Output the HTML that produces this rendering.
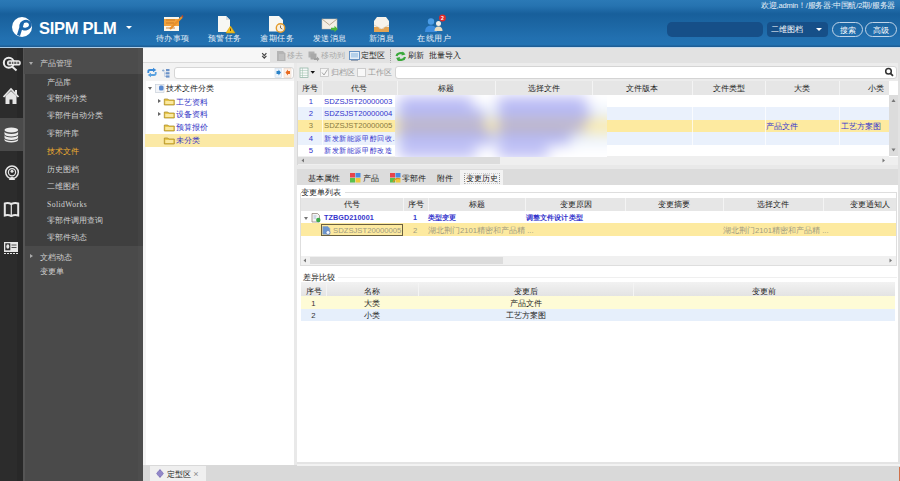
<!DOCTYPE html>
<html><head><meta charset="utf-8">
<style>
*{margin:0;padding:0;box-sizing:border-box}
html,body{width:900px;height:481px;overflow:hidden;background:#fff;font-family:"Liberation Sans",sans-serif;font-size:8px;color:#222}
.a{position:absolute}
.hdr{left:0;top:0;width:900px;height:47px;background:linear-gradient(#2b79b6 0px,#2673b0 6px,#175f9b 14px,#1c66a3 24px,#2270b0 38px,#2272b2 44.5px,#1d5e96 46.5px,#1d5e96 47px)}
.logo{left:12px;top:16px;width:21px;height:21px;border-radius:50%;background:#fff}
.brand{left:39px;top:18.5px;color:#fff;font-weight:bold;font-size:16.5px;letter-spacing:-0.3px}
.caret{left:126px;top:26px;width:0;height:0;border-left:3px solid transparent;border-right:3px solid transparent;border-top:3px solid #fff}
.nav{top:33px;color:#e8f0f8;font-size:8px;letter-spacing:0.5px;text-indent:0.5px;text-align:center;width:50px}
.welcome{left:761px;top:1px;color:#e8f0f8;font-size:7.5px;letter-spacing:-0.2px;white-space:nowrap}
.srch{left:667px;top:22px;width:96px;height:15px;background:#164f88;border-radius:5px}
.sel{left:767px;top:22px;width:61px;height:15px;background:#164f88;border-radius:4px;color:#fff;font-size:7.7px;padding:3px 0 0 4px}
.btn{top:22px;height:15px;border:1px solid #c0d4e8;border-radius:8px;color:#fff;font-size:7.7px;text-align:center;padding-top:3px}
.iconbar{left:0;top:47px;width:24px;height:434px;background:#2c2c2c}
.menu{left:24px;top:47px;width:119px;height:434px;background:#4a4a4a}
.mi{color:#d2d2d2;font-size:7.7px;white-space:nowrap;left:47px}
.sep{background:#e4e4e4}
.tr{font-size:7.5px;color:#3030c4;white-space:nowrap}
.tb{top:51px;font-size:7.7px;color:#222;white-space:nowrap}
.gh{background:#e6e6e6}
.ght{top:84px;font-size:7.7px;color:#222;text-align:center;white-space:nowrap}
.vs{width:1px;background:#f4f4f4}
.gc{font-size:7.7px;color:#3434cc;white-space:nowrap}
.b{font-weight:bold;font-size:7.2px;letter-spacing:0.1px}
.tab{top:174px;font-size:7.7px;color:#222;white-space:nowrap}
</style></head><body>
<!-- HEADER -->
<div class="a hdr"></div>
<svg class="a" style="left:0;top:0" width="900" height="47" viewBox="0 0 900 47">
 <circle cx="22" cy="27" r="10" fill="#fff"/>
 <path d="M22.5 22.5 L18.5 35.5" stroke="#1d66aa" stroke-width="3.2"/>
 <ellipse cx="25.6" cy="25.2" rx="4.8" ry="3.9" fill="none" stroke="#1d66aa" stroke-width="2.8" transform="rotate(-15 25.6 25.2)"/>
 <!-- todo icon -->
 <rect x="164" y="17" width="15" height="14" fill="#fbf6ea"/>
 <rect x="164" y="19" width="15" height="7" fill="#f0a23c"/>
 <path d="M166 20h9M166 23h8M166 28h9" stroke="#c07020" stroke-width="0.8"/>
 <path d="M170 29 L182 17" stroke="#e8902a" stroke-width="2.2"/>
 <path d="M182 16.5 L183 16" stroke="#d04020" stroke-width="2"/>
 <!-- warning doc -->
 <path d="M218 16h8l4 4v12h-12z" fill="#f7f7f4"/>
 <path d="M226 16v4h4" fill="#ddd"/>
 <path d="M230.5 26 L235 33 L226 33z" fill="#f0c020" stroke="#d09a10" stroke-width="0.6"/>
 <path d="M230.5 28.5v2.5" stroke="#603000" stroke-width="0.8"/>
 <!-- overdue doc -->
 <path d="M269 16h10l4 4v11.5h-14z" fill="#f7f7f4"/>
 <circle cx="280.5" cy="28" r="4.2" fill="#f8f0e0" stroke="#e39a2a" stroke-width="1.4"/>
 <path d="M280.5 25.5v2.5l1.8 1" stroke="#705030" stroke-width="0.8" fill="none"/>
 <!-- send msg -->
 <rect x="322" y="19" width="15" height="10" fill="#f3efe6" stroke="#c9c0b0" stroke-width="0.5"/>
 <path d="M322 19 L329.5 25 L337 19" stroke="#b8a890" stroke-width="1" fill="none"/>
 <path d="M331 27.8h3.5v-2l3.3 3.2-3.3 3.2v-2h-3.5z" fill="#4cb83a"/>
 <!-- new msg -->
 <path d="M374 21 L377 17 L386 17 L389 21 V32 H374z" fill="#f6f2ea"/>
 <path d="M374 25 L381.5 29 L389 25" stroke="#d5c6b0" stroke-width="0.8" fill="none"/>
 <path d="M374 27 H378 L380 29 H383 L385 27 H389 V32 H374z" fill="#e3a453"/>
 <!-- users -->
 <circle cx="431" cy="21.5" r="3.2" fill="#4a9ce6"/>
 <path d="M425 32 Q425 25.5 431 25.5 Q437 25.5 437 32z" fill="#3d8ee0"/>
 <circle cx="438.5" cy="23.5" r="2.5" fill="#f2efe8"/>
 <path d="M434.5 31 Q434.5 26.5 438.5 26.5 Q442.5 26.5 442.5 31z" fill="#e8dcc0"/>
 <circle cx="442.5" cy="18" r="3.4" fill="#e02a2a"/>
 <text x="442.5" y="20.2" font-size="5" fill="#fff" text-anchor="middle" font-family="Liberation Sans" font-weight="bold">2</text>
</svg>
<div class="a brand">SIPM PLM</div>
<div class="a caret"></div>
<div class="a nav" style="left:147.5px">待办事项</div>
<div class="a nav" style="left:199.5px">预警任务</div>
<div class="a nav" style="left:251.75px">逾期任务</div>
<div class="a nav" style="left:304.5px">发送消息</div>
<div class="a nav" style="left:356.25px">新消息</div>
<div class="a nav" style="left:409px">在线用户</div>
<div class="a welcome">欢迎,admin！/服务器:中国航/2期/服务器</div>
<div class="a srch"></div>
<div class="a sel">二维图档</div>
<div class="a" style="left:816px;top:28px;width:0;height:0;border-left:3px solid transparent;border-right:3px solid transparent;border-top:3.5px solid #fff"></div>
<div class="a btn" style="left:832px;width:31px">搜索</div>
<div class="a btn" style="left:865px;width:32px">高级</div>

<!-- LEFT -->
<div class="a iconbar"></div>
<div class="a menu"></div>
<div class="a" style="left:17px;top:47px;width:6px;height:434px;background:#282828"></div><div class="a" style="left:23px;top:47px;width:2px;height:434px;background:#555"></div>
<div class="a" style="left:0;top:118px;width:23px;height:33px;background:#4a4a4a"></div>

<svg class="a" style="left:0;top:47px" width="24" height="220" viewBox="0 47 24 220">
 <circle cx="8.8" cy="62.8" r="5" fill="none" stroke="#ececec" stroke-width="2"/>
 <path d="M12.3 66.8 L16.5 70.5" stroke="#ececec" stroke-width="2"/>
 <rect x="7" y="60.2" width="13.8" height="5.4" rx="2.7" fill="#ececec"/>
 <path d="M8.8 62.9h2.2M11.8 62.9h1.6M14.2 62.9h2.2M17.2 62.9h2" stroke="#666" stroke-width="2.4"/>
 <path d="M3.5 97 L11 89 L18.5 97" stroke="#e6e6e6" stroke-width="1.8" fill="none"/>
 <path d="M5.5 96 V104 H9.5 V99.5 H12.5 V104 H16.5 V96 L11 91z" fill="#e6e6e6"/>
 <rect x="15" y="90" width="2" height="4" fill="#e6e6e6"/>
 <ellipse cx="11.3" cy="130" rx="6.8" ry="2.4" fill="#ececec"/>
 <path d="M4.5 131.5 v2.5 a6.8 2.4 0 0 0 13.6 0 v-2.5 a6.8 2.4 0 0 1 -13.6 0z" fill="#ececec"/>
 <path d="M4.5 135 v2.5 a6.8 2.4 0 0 0 13.6 0 v-2.5 a6.8 2.4 0 0 1 -13.6 0z" fill="#ececec"/>
 <path d="M4.5 138.5 v1.5 a6.8 2.4 0 0 0 13.6 0 v-1.5 a6.8 2.4 0 0 1 -13.6 0z" fill="#ececec"/>
 <circle cx="12" cy="172.3" r="6.3" fill="none" stroke="#e6e6e6" stroke-width="1.5"/>
 <circle cx="12" cy="172.3" r="3.6" fill="none" stroke="#e6e6e6" stroke-width="1.2"/>
 <circle cx="12" cy="171.3" r="1.5" fill="#e6e6e6"/>
 <path d="M8.8 180 Q12 173.5 15.2 180z" fill="#e6e6e6"/>
 <path d="M4.8 203.5 Q8 202.5 11.3 204 Q14.6 202.5 18.2 203.5 V215.5 Q14.6 214.5 11.3 216 Q8 214.5 4.8 215.5z" fill="none" stroke="#e6e6e6" stroke-width="2"/>
 <path d="M11.3 204 V216" stroke="#e6e6e6" stroke-width="1.2"/>
 <rect x="4" y="242" width="14" height="10" fill="#e6e6e6"/>
 <rect x="5.3" y="243.3" width="5" height="7" fill="#2b2b2b"/>
 <ellipse cx="7.8" cy="246.5" rx="1.5" ry="2.2" fill="#e6e6e6"/>
 <path d="M11.5 245h5M11.5 247.5h5" stroke="#2b2b2b" stroke-width="0.8"/>
 <path d="M4 253.5h14" stroke="#e6e6e6" stroke-width="1.2" stroke-dasharray="2 1"/>
</svg>
<div class="a" style="left:24px;top:48px;width:119px;height:25.5px;background:#4c4c4c"></div><div class="a" style="left:25px;top:73.5px;width:118px;height:172.5px;background:#3f3f3f"></div><div class="a" style="left:138px;top:48px;width:5px;height:433px;background:rgba(128,128,128,0.06)"></div>
<div class="a mi" style="left:40px;top:59px">产品管理</div>
<div class="a" style="left:29px;top:62px;width:0;height:0;border-left:2.5px solid transparent;border-right:2.5px solid transparent;border-top:3.5px solid #aaa"></div>
<div class="a" style="left:30px;top:254px;width:0;height:0;border-top:2.5px solid transparent;border-bottom:2.5px solid transparent;border-left:3.5px solid #aaa"></div>
<div class="a mi" style="top:78px">产品库</div>
<div class="a mi" style="top:94px">零部件分类</div>
<div class="a mi" style="top:111px">零部件自动分类</div>
<div class="a mi" style="top:129px">零部件库</div>
<div class="a mi" style="top:147px;color:#f0b030">技术文件</div>
<div class="a mi" style="top:165px">历史图档</div>
<div class="a mi" style="top:182px">二维图档</div>
<div class="a mi" style="top:200px;font-family:'Liberation Serif',serif;letter-spacing:0.4px">SolidWorks</div>
<div class="a mi" style="top:216px">零部件调用查询</div>
<div class="a mi" style="top:233px">零部件动态</div>
<div class="a mi" style="left:40px;top:253px">文档动态</div>
<div class="a mi" style="left:40px;top:267px">变更单</div>

<!-- TREE PANEL -->
<div class="a" style="left:143px;top:47px;width:157px;height:418px;background:#e9e9e9"></div><div class="a" style="left:143px;top:81px;width:3px;height:384px;background:#f4f4f4"></div>
<div class="a" style="left:143px;top:47px;width:127px;height:16px;background:#f7f7f7;border-bottom:1px solid #dadada"></div>
<svg class="a" style="left:260px;top:51px" width="9" height="10" viewBox="260 51 9 10"><path d="M262.2 53.2 L264.3 55.6 L266.4 53.2 M262.2 55.8 L264.3 58.2 L266.4 55.8" stroke="#444" stroke-width="1.2" fill="none"/></svg>
<div class="a" style="left:143px;top:63px;width:151px;height:18px;background:#f3f3f3"></div>
<div class="a" style="left:174px;top:67px;width:120px;height:12px;background:#fff;border:1px solid #d6d6d6;border-radius:3px"></div>
<div class="a" style="left:146px;top:81px;width:148px;height:384px;background:#fff"></div>
<div class="a" style="left:145px;top:134px;width:149px;height:13px;background:#fbe9a6"></div>
<div class="a" style="left:147.5px;top:86.5px;width:0;height:0;border-left:2px solid transparent;border-right:2px solid transparent;border-top:3.5px solid #666"></div>
<div class="a tr" style="left:166px;top:84px;color:#222">技术文件分类</div>
<div class="a" style="left:157.5px;top:99px;width:0;height:0;border-top:2px solid transparent;border-bottom:2px solid transparent;border-left:3.5px solid #666"></div>
<div class="a tr" style="left:176px;top:98px">工艺资料</div>
<div class="a" style="left:157.5px;top:112px;width:0;height:0;border-top:2px solid transparent;border-bottom:2px solid transparent;border-left:3.5px solid #666"></div>
<div class="a tr" style="left:176px;top:110px">设备资料</div>
<div class="a tr" style="left:176px;top:123px">预算报价</div>
<div class="a tr" style="left:176px;top:136px">未分类</div>

<!-- MAIN TOOLBAR -->
<div class="a" style="left:270px;top:47px;width:630px;height:16px;background:#e2e2e2"></div>
<div class="a tb" style="left:287px;color:#aaa">移去</div>
<div class="a tb" style="left:321px;color:#aaa">移动到</div>
<div class="a tb" style="left:361px">定型区</div>
<div class="a" style="left:390px;top:50px;width:1px;height:11px;border-left:1px dotted #999"></div>
<div class="a tb" style="left:408px">刷新</div>
<div class="a tb" style="left:429px">批量导入</div>

<div class="a" style="left:297px;top:63px;width:603px;height:18px;background:#ececec"></div>
<div class="a tb" style="left:331px;top:68px;color:#999">归档区</div>
<div class="a tb" style="left:368px;top:68px;color:#999">工作区</div>
<div class="a" style="left:357px;top:68px;width:9px;height:9px;border:1px solid #cdcdcd;background:#f8f8f8"></div>
<div class="a" style="left:395px;top:66px;width:502px;height:13px;background:#fff;border:1px solid #d4d4d4;border-radius:3px"></div>

<!-- MAIN GRID -->
<div class="a" style="left:297px;top:81px;width:603px;height:84px;background:#fff;border-left:1px solid #d8d8d8"></div>
<div class="a gh" style="left:298px;top:81px;width:591px;height:14px"></div>
<div class="a" style="left:298px;top:95px;width:591px;height:12px;background:#fff"></div>
<div class="a" style="left:298px;top:107px;width:591px;height:13px;background:#eaf1fc"></div>
<div class="a" style="left:298px;top:120px;width:591px;height:12px;background:#fdeaa0"></div>
<div class="a" style="left:298px;top:132px;width:591px;height:13px;background:#eaf1fc"></div>
<div class="a" style="left:298px;top:145px;width:591px;height:11px;background:#fff"></div>
<div class="a" style="left:298px;top:156px;width:591px;height:9px;background:#efefef"></div>
<div class="a" style="left:298px;top:157px;width:202px;height:7px;background:#dcdcdc"></div>
<div class="a" style="left:889px;top:95px;width:9px;height:61px;background:#dcdcdc"></div>
<div class="a" style="left:898px;top:47px;width:2px;height:418px;background:#e2e2e2"></div>

<!-- TABS -->
<div class="a" style="left:297px;top:165px;width:601px;height:4px;background:#e9e9e9"></div>
<div class="a" style="left:297px;top:169px;width:601px;height:16px;background:#dcdcdc"></div>
<div class="a" style="left:460px;top:170px;width:43px;height:15px;background:#f3f3f3"></div>
<div class="a tab" style="left:308px">基本属性</div>
<div class="a tab" style="left:363px">产品</div>
<div class="a tab" style="left:402px">零部件</div>
<div class="a tab" style="left:437px">附件</div>
<div class="a tab" style="left:464px;top:173px;border:1px dotted #ccc;border-left-color:#888;border-right-color:#888;padding:0 1px;line-height:9px">变更历史</div>

<!-- CHANGE LIST -->
<div class="a" style="left:297px;top:185px;width:601px;height:279px;background:#fff"></div>
<div class="a tb" style="left:301px;top:188px">变更单列表</div>
<!-- ICONS TREE/TOOLBAR -->
<svg class="a" style="left:143px;top:47px" width="330" height="110" viewBox="143 47 330 110">
 <!-- refresh blue -->
 <path d="M148.3 73 V71.5 Q148.3 70 150 70 H153.5" stroke="#3a8ad8" stroke-width="1.8" fill="none"/>
 <path d="M153 67.8 L156.3 70 L153 72.2z" fill="#3a8ad8"/>
 <path d="M155.7 72 V73.5 Q155.7 75 154 75 H150.5" stroke="#5aa2e0" stroke-width="1.8" fill="none"/>
 <path d="M151 72.8 L147.7 75 L151 77.2z" fill="#5aa2e0"/>
 <!-- tree icon -->
 <path d="M162 70.5h2.5M163.2 69.3v2.4" stroke="#8aaad0" stroke-width="0.9"/>
 <rect x="166" y="69" width="3.5" height="2.2" fill="#6a92c8"/>
 <rect x="166" y="72.2" width="3.5" height="2.2" fill="#6a92c8"/>
 <rect x="166" y="75.4" width="3.5" height="2.2" fill="#6a92c8"/>
 <path d="M164.8 71.5v5h1.2M164.8 73.3h1.2" stroke="#9ab4d8" stroke-width="0.7" fill="none"/>
 <!-- small arrows in input -->
 <rect x="275" y="68.5" width="6.5" height="9" fill="#eef4fa" stroke="#c8d8e8" stroke-width="0.5"/>
 <path d="M276.5 71h2v-1.5l2.5 3-2.5 3v-1.5h-2z" fill="#2a82c8"/>
 <rect x="284" y="68.5" width="7" height="9" fill="#fbf0e8" stroke="#e8d0c0" stroke-width="0.5"/>
 <path d="M290 71h-2v-1.5l-2.5 3 2.5 3v-1.5h2z" fill="#e86a20"/>
 <!-- tree root icon -->
 <rect x="155.5" y="84.5" width="8.5" height="8" fill="#f2f4f8" stroke="#c0c8d4" stroke-width="0.6"/>
 <rect x="159" y="85.5" width="4.5" height="5" rx="1.5" fill="#5a8ad0"/>
 <!-- folders -->
 <g id="fd"><path d="M164.3 99 h3.5 l1 1 h5.5 v5 h-10z" fill="#e8c64a" stroke="#a48420" stroke-width="0.7"/><path d="M165.3 101 h8 v3 h-8z" fill="#fbe9a0"/></g>
 <use href="#fd" y="13"/><use href="#fd" y="26"/><use href="#fd" y="39"/>
 <!-- toolbar icons -->
 <path d="M277 51h6l2.5 2.5v7.5h-8.5z" fill="#b4b4b4"/>
 <path d="M279 55h5M279 57h5M279 59h5" stroke="#d8d8d8" stroke-width="0.7"/>
 <path d="M308.5 51.5h6v6h-6z" fill="#b0b0b0"/>
 <path d="M310.5 53.5h6v6h-6z" fill="#a8a8a8"/>
 <path d="M314 58h3v-1.5l2.5 2.5-2.5 2.5v-1.5h-3z" fill="#a0a0a0"/>
 <rect x="349.5" y="51.5" width="10" height="8" fill="#e6eef6" stroke="#5a8ac0" stroke-width="0.9"/>
 <rect x="351" y="53" width="7" height="4.5" fill="#b4d0ea"/>
 <path d="M351 60.3h7" stroke="#7a8aa0" stroke-width="0.9"/>
 <path d="M390.5 49v14" stroke="#a0a0a0" stroke-width="0.7" stroke-dasharray="1 1.2"/>
 <path d="M396.5 56 A4.5 3.5 0 0 1 404 54" stroke="#3aa83a" stroke-width="2.2" fill="none"/>
 <path d="M402.5 51.5 L405.5 54.5 L401.5 55.5z" fill="#3aa83a"/>
 <path d="M405 57 A4.5 3.5 0 0 1 397.5 59" stroke="#3aa83a" stroke-width="2.2" fill="none"/>
 <path d="M399 61 L396 58 L400 57z" fill="#3aa83a"/>
 <!-- grid icon -->
 <rect x="300" y="68" width="8" height="9.5" fill="#f6f8f8" stroke="#8ab0a0" stroke-width="0.7"/>
 <path d="M300 70.5h8M300 73h8M300 75.5h8M302.5 68v9.5" stroke="#9ac0aa" stroke-width="0.5"/>
 <path d="M310.5 71h4.5l-2.25 2.8z" fill="#111"/>
 <!-- checkbox checked -->
 <rect x="320.5" y="68.5" width="8" height="8" fill="#f6f6f6" stroke="#c4c4c4" stroke-width="0.8"/>
 <path d="M322 72.5 L324 75 L327.5 69.5" stroke="#a8a8a8" stroke-width="1" fill="none"/>
</svg>
<div class="a" style="left:322px;top:95px;width:1px;height:61px;background:rgba(255,255,255,0.7)"></div><div class="a" style="left:397px;top:95px;width:1px;height:61px;background:rgba(255,255,255,0.7)"></div><div class="a" style="left:495px;top:95px;width:1px;height:61px;background:rgba(255,255,255,0.7)"></div><div class="a" style="left:592px;top:95px;width:1px;height:61px;background:rgba(255,255,255,0.7)"></div><div class="a" style="left:692px;top:95px;width:1px;height:61px;background:rgba(255,255,255,0.7)"></div><div class="a" style="left:765px;top:95px;width:1px;height:61px;background:rgba(255,255,255,0.7)"></div><div class="a" style="left:839px;top:95px;width:1px;height:61px;background:rgba(255,255,255,0.7)"></div>
<!-- MAIN GRID TEXT -->
<div class="a ght" style="left:298px;width:24px">序号</div>
<div class="a ght" style="left:320px;width:77px">代号</div>
<div class="a ght" style="left:397px;width:98px">标题</div>
<div class="a ght" style="left:495px;width:97px">选择文件</div>
<div class="a ght" style="left:592px;width:100px">文件版本</div>
<div class="a ght" style="left:692px;width:73px">文件类型</div>
<div class="a ght" style="left:765px;width:74px">大类</div>
<div class="a ght" style="left:839px;width:50px;text-align:right;padding-right:5px">小类</div>
<div class="a vs" style="left:322px;top:81px;height:14px"></div>
<div class="a vs" style="left:397px;top:81px;height:14px"></div>
<div class="a vs" style="left:495px;top:81px;height:14px"></div>
<div class="a vs" style="left:592px;top:81px;height:14px"></div>
<div class="a vs" style="left:692px;top:81px;height:14px"></div>
<div class="a vs" style="left:765px;top:81px;height:14px"></div>
<div class="a vs" style="left:839px;top:81px;height:14px"></div>
<div class="a gc" style="left:300px;top:97px;width:22px;text-align:center">1</div>
<div class="a gc" style="left:300px;top:109px;width:22px;text-align:center">2</div>
<div class="a gc" style="left:300px;top:121px;width:22px;text-align:center;color:#8a7a40">3</div>
<div class="a gc" style="left:300px;top:134px;width:22px;text-align:center">4</div>
<div class="a gc" style="left:300px;top:146px;width:22px;text-align:center">5</div>
<div class="a gc" style="left:324px;top:97px">SDZSJST20000003</div>
<div class="a gc" style="left:324px;top:109px">SDZSJST20000004</div>
<div class="a gc" style="left:324px;top:121px;color:#8a7a40">SDZSJST20000005</div>
<div class="a gc" style="left:324px;top:134px;font-size:7.3px;letter-spacing:0.6px;width:72px;overflow:hidden;white-space:nowrap">新发新能源甲醇回收.</div>
<div class="a gc" style="left:324px;top:146px;font-size:7.3px;letter-spacing:0.6px;width:72px;overflow:hidden;white-space:nowrap">新发新能源甲醇改造</div>
<div class="a gc" style="left:766px;top:121.5px">产品文件</div>
<div class="a gc" style="left:841px;top:121.5px">工艺方案图</div>
<!-- blur -->
<div class="a" style="left:395px;top:95px;width:212px;height:62px;overflow:hidden">
 <div class="a" style="left:-20px;top:-20px;width:260px;height:102px;filter:blur(7px)">
 <div class="a" style="left:0;top:0px;width:260px;height:32px;background:#ffffff"></div><div class="a" style="left:0;top:32px;width:260px;height:13px;background:#eaf1fc"></div><div class="a" style="left:0;top:45px;width:260px;height:12px;background:#fdeaa0"></div><div class="a" style="left:0;top:57px;width:260px;height:13px;background:#eaf1fc"></div><div class="a" style="left:0;top:70px;width:260px;height:31px;background:#ffffff"></div><div class="a" style="left:24px;top:22px;width:73px;height:10px;background:rgba(104,104,232,0.5)"></div><div class="a" style="left:123px;top:22px;width:88px;height:10px;background:rgba(104,104,232,0.5)"></div><div class="a" style="left:24px;top:34px;width:85px;height:10px;background:rgba(104,104,232,0.5)"></div><div class="a" style="left:123px;top:34px;width:92px;height:10px;background:rgba(104,104,232,0.5)"></div><div class="a" style="left:24px;top:47px;width:87px;height:10px;background:rgba(104,104,232,0.5)"></div><div class="a" style="left:123px;top:47px;width:86px;height:10px;background:rgba(104,104,232,0.5)"></div><div class="a" style="left:24px;top:59px;width:95px;height:10px;background:rgba(104,104,232,0.5)"></div><div class="a" style="left:123px;top:59px;width:72px;height:10px;background:rgba(104,104,232,0.5)"></div><div class="a" style="left:24px;top:72px;width:77px;height:10px;background:rgba(104,104,232,0.5)"></div><div class="a" style="left:123px;top:72px;width:50px;height:10px;background:rgba(104,104,232,0.5)"></div>
 </div>
</div>
<!-- CHANGE LIST GRID -->
<div class="a" style="left:300px;top:193px;width:597px;height:73px;border:1px solid #dedede;border-top:none"></div>
<div class="a gh" style="left:301px;top:198px;width:595px;height:13px"></div>
<div class="a ght" style="left:301px;top:200px;width:102px">代号</div>
<div class="a ght" style="left:403px;top:200px;width:25px">序号</div>
<div class="a ght" style="left:428px;top:200px;width:97px">标题</div>
<div class="a ght" style="left:525px;top:200px;width:102px">变更原因</div>
<div class="a ght" style="left:625px;top:200px;width:98px">变更摘要</div>
<div class="a ght" style="left:723px;top:200px;width:100px">选择文件</div>
<div class="a ght" style="left:823px;top:200px;width:73px;text-align:right;padding-right:6px">变更通知人</div>
<div class="a vs" style="left:403px;top:198px;height:13px"></div>
<div class="a vs" style="left:428px;top:198px;height:13px"></div>
<div class="a vs" style="left:525px;top:198px;height:13px"></div>
<div class="a vs" style="left:625px;top:198px;height:13px"></div>
<div class="a vs" style="left:723px;top:198px;height:13px"></div>
<div class="a vs" style="left:823px;top:198px;height:13px"></div>
<div class="a" style="left:301px;top:223px;width:595px;height:13px;background:#fdeaa0"></div>
<div class="a" style="left:304px;top:217px;width:0;height:0;border-left:2px solid transparent;border-right:2px solid transparent;border-top:3.5px solid #777"></div>
<div class="a gc b" style="left:324px;top:213px">TZBGD210001</div>
<div class="a gc b" style="left:413px;top:213px">1</div>
<div class="a gc b" style="left:428px;top:213px">类型变更</div>
<div class="a gc b" style="left:526px;top:213px">调整文件设计类型</div>
<div class="a" style="left:321px;top:224px;width:82px;height:12px;border:1px solid #6a6040"></div>
<div class="a gc" style="left:333px;top:226px;color:#a09a80">SDZSJST20000005</div>
<div class="a gc" style="left:413px;top:226px;color:#a09a80">2</div>
<div class="a gc" style="left:428px;top:226px;color:#a09a80">湖北荆门2101精密和产品精 ...</div>
<div class="a gc" style="left:723px;top:226px;color:#a09a80">湖北荆门2101精密和产品精 ...</div>
<div class="a" style="left:301px;top:256px;width:595px;height:9px;background:#f0f0f0"></div>
<div class="a" style="left:310px;top:257px;width:193px;height:7px;background:#dcdcdc"></div>

<!-- DIFF GRID -->
<div class="a tb" style="left:303px;top:273px">差异比较</div>
<div class="a" style="left:338px;top:277px;width:559px;height:1px;background:#efefef"></div>
<div class="a" style="left:301px;top:282px;width:594px;height:15px;background:linear-gradient(#f2f2f2,#e2e2e2)"></div>
<div class="a ght" style="left:301px;top:287px;width:25px">序号</div>
<div class="a ght" style="left:326px;top:287px;width:92px">名称</div>
<div class="a ght" style="left:418px;top:287px;width:215px">变更后</div>
<div class="a ght" style="left:633px;top:287px;width:262px">变更前</div>
<div class="a vs" style="left:326px;top:283px;height:38px"></div>
<div class="a vs" style="left:418px;top:283px;height:38px"></div>
<div class="a vs" style="left:633px;top:283px;height:38px"></div>
<div class="a" style="left:301px;top:296px;width:594px;height:13px;background:#fefbd6"></div>
<div class="a" style="left:301px;top:309px;width:594px;height:12px;background:#e6effb"></div>
<div class="a gc" style="left:301px;top:299px;width:25px;text-align:center;color:#333">1</div>
<div class="a gc" style="left:301px;top:311px;width:25px;text-align:center;color:#333">2</div>
<div class="a gc" style="left:326px;top:299px;width:92px;text-align:center;color:#222">大类</div>
<div class="a gc" style="left:326px;top:311px;width:92px;text-align:center;color:#222">小类</div>
<div class="a gc" style="left:418px;top:299px;width:215px;text-align:center;color:#222">产品文件</div>
<div class="a gc" style="left:418px;top:311px;width:215px;text-align:center;color:#222">工艺方案图</div>

<!-- MISC ICONS -->
<svg class="a" style="left:290px;top:60px" width="610" height="421" viewBox="290 60 610 421">
 <!-- search icon -->
 <circle cx="888.5" cy="71.3" r="2.8" fill="none" stroke="#333" stroke-width="1.5"/>
 <path d="M890.5 73.3 L893 75.8" stroke="#333" stroke-width="1.8"/>
 <!-- main grid scroll arrows -->
 <path d="M301.5 160.5 L304 158.5 V162.5z" fill="#777"/>
 <path d="M885 160.5 L882.5 158.5 V162.5z" fill="#777"/>
 <path d="M893.5 99 L891.5 102 H895.5z" fill="#777"/>
 <path d="M893.5 151.5 L891.5 148.5 H895.5z" fill="#777"/>
 <!-- change list scroll arrows -->
 <path d="M303.5 260.5 L306 258.5 V262.5z" fill="#777"/>
 <path d="M892 260.5 L889.5 258.5 V262.5z" fill="#777"/>
 <!-- tab icons -->
 <rect x="350" y="173" width="5" height="4.5" fill="#e8434a"/>
 <rect x="355.5" y="173" width="5" height="4.5" fill="#4a8ae0"/>
 <rect x="350" y="178" width="5" height="4.5" fill="#5ac04a"/>
 <rect x="355.5" y="178" width="5" height="4.5" fill="#f0c83a"/>
 <rect x="390" y="173" width="5" height="4.5" fill="#e8434a"/>
 <rect x="395.5" y="173" width="5" height="4.5" fill="#4a8ae0"/>
 <rect x="390" y="178" width="5" height="4.5" fill="#5ac04a"/>
 <rect x="395.5" y="178" width="5" height="4.5" fill="#f0c83a"/>
 <path d="M393 182 Q396 177 400 179" stroke="#d89020" stroke-width="1.2" fill="none"/>
 <!-- change list icons -->
 <path d="M312 213.5h5.5l2 2v6.5h-7.5z" fill="#f4f4f4" stroke="#8a7a70" stroke-width="0.7"/><path d="M313.5 216h3M313.5 218h2.5" stroke="#9ab0d0" stroke-width="0.8"/>
 <circle cx="318.3" cy="220" r="2.2" fill="#3aa848"/>
 <path d="M322.8 226.5h5l2 2v5.8h-7z" fill="#6a96d0" stroke="#8aa0c0" stroke-width="0.6"/>
 <circle cx="328" cy="232.5" r="2" fill="#f4f8ff" stroke="#5a7ab0" stroke-width="0.7"/>
</svg>
<div class="a" style="left:345px;top:192px;width:552px;height:1px;background:#dedede"></div>
<div class="a" style="left:889px;top:157px;width:9px;height:8px;background:#efefef"></div>
<!-- STATUS -->
<div class="a" style="left:143px;top:465px;width:757px;height:16px;background:#d9d9d9"></div>
<div class="a" style="left:150px;top:466px;width:56px;height:15px;background:#efefef"></div>
<svg class="a" style="left:150px;top:466px" width="20" height="15" viewBox="150 466 20 15"><path d="M160 469 L163.8 473.5 L160 478 L156.2 473.5z" fill="#7f74b8"/><circle cx="160" cy="473.5" r="2.8" fill="#9288c8"/></svg>
<div class="a tb" style="left:167px;top:470px">定型区</div>
<div class="a tb" style="left:193px;top:470px;color:#888;font-size:7px">&#x2A2F;</div>
<div class="a" style="left:297px;top:462px;width:601px;height:2px;background:#e4e4e4"></div>
<div class="a" style="left:297px;top:464px;width:603px;height:2px;background:#f2f2f2"></div>
<div class="a" style="left:899px;top:467px;width:1px;height:14px;background:#d0704a"></div>
<div class="a" style="left:0;top:47px;width:900px;height:1px;background:linear-gradient(90deg,#a4c8e6,#c4d8ea 300px,#cddff0)"></div>
</body></html>
